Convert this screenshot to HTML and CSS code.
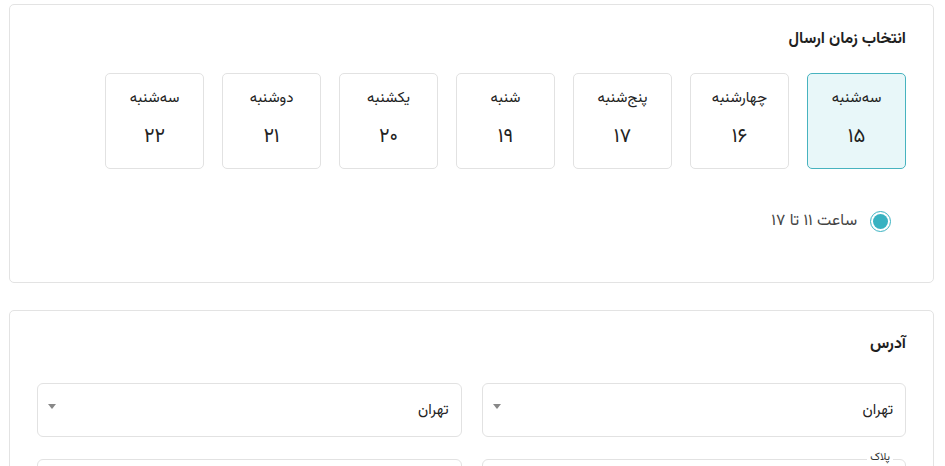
FILE: index.html
```html
<!DOCTYPE html>
<html lang="fa" dir="rtl">
<head>
<meta charset="utf-8">
<link rel="stylesheet" href="styles.css">
</head>
<body>
<div class="page">
  <section class="card card-time">
    <h2 class="title">انتخاب زمان ارسال</h2>
    <div class="days">
      <div class="day active"><span class="day-name">سه‌شنبه</span><span class="day-num">۱۵</span></div>
      <div class="day"><span class="day-name">چهارشنبه</span><span class="day-num">۱۶</span></div>
      <div class="day"><span class="day-name">پنج‌شنبه</span><span class="day-num">۱۷</span></div>
      <div class="day"><span class="day-name">شنبه</span><span class="day-num">۱۹</span></div>
      <div class="day"><span class="day-name">یکشنبه</span><span class="day-num">۲۰</span></div>
      <div class="day"><span class="day-name">دوشنبه</span><span class="day-num">۲۱</span></div>
      <div class="day"><span class="day-name">سه‌شنبه</span><span class="day-num">۲۲</span></div>
    </div>
    <label class="slot">
      <span class="radio"><span class="radio-dot"></span></span>
      <span class="slot-text">ساعت ۱۱ تا ۱۷</span>
    </label>
  </section>

  <section class="card card-address">
    <h2 class="title">آدرس</h2>
    <div class="grid">
      <div class="select"><span class="select-value">تهران</span><span class="caret"></span></div>
      <div class="select"><span class="select-value">تهران</span><span class="caret"></span></div>
      <div class="field"><span class="field-label">پلاک</span></div>
      <div class="field"></div>
    </div>
  </section>
</div>
</body>
</html>
```
FILE: styles.css
```css
* { box-sizing: border-box; }
html, body { margin: 0; padding: 0; background: #fff; }
body {
  font-family: "Vazirmatn", "Noto Sans Arabic", "DejaVu Sans", sans-serif;
  color: #222;
  overflow: hidden;
}
.page {
  padding: 4px 11px 0 9px;
  display: flex;
  flex-direction: column;
  gap: 27px;
}
.card {
  border: 1px solid #e3e3e3;
  border-radius: 5px;
  background: #fff;
  padding: 0 27px 0 27px;
}
.title {
  margin: 0;
  font-size: 16px;
  font-weight: 700;
  line-height: 20px;
  color: #1f1f1f;
}
.card-time { height: 279px; padding-top: 25px; }
.days {
  display: flex;
  gap: 18px;
  margin-top: 23px;
}
.day {
  width: 99px;
  height: 96px;
  border: 1px solid #e2e2e2;
  border-radius: 5px;
  display: flex;
  flex-direction: column;
  align-items: center;
  padding-top: 14px;
  gap: 14px;
}
.day.active {
  background: #e8f7f9;
  border-color: #47b3bf;
}
.day-name { font-size: 15px; line-height: 22px; color: #222; }
.day-num { font-size: 20px; line-height: 26px; color: #222; }
.slot {
  display: flex;
  align-items: center;
  gap: 13px;
  margin-top: 40px;
  padding-right: 15px;
}
.radio {
  width: 21px;
  height: 21px;
  border-radius: 50%;
  border: 1.5px solid #3bb3c2;
  display: flex;
  align-items: center;
  justify-content: center;
}
.radio-dot {
  width: 15px;
  height: 15px;
  border-radius: 50%;
  background: #38b2c1;
}
.slot-text { font-size: 16px; color: #444; }
.card-address { padding-top: 24px; height: 200px; }
.grid {
  display: grid;
  grid-template-columns: 1fr 1fr;
  column-gap: 20px;
  row-gap: 22px;
  margin-top: 28px;
}
.select {
  height: 54px;
  border: 1px solid #e2e2e2;
  border-radius: 6px;
  display: flex;
  align-items: center;
  justify-content: space-between;
  padding: 0 12px 0 10px;
}
.select-value { font-size: 15px; color: #222; }
.caret {
  align-self: flex-start;
  margin-top: 20px;
  width: 0; height: 0;
  border-left: 4px solid transparent;
  border-right: 4px solid transparent;
  border-top: 5px solid #888;
}
.field {
  height: 54px;
  border: 1px solid #e2e2e2;
  border-radius: 6px;
  position: relative;
}
.field-label {
  position: absolute;
  top: -9px;
  right: 12px;
  background: #fff;
  padding: 0 3px;
  font-size: 11px;
  line-height: 14px;
  color: #333;
}
```
